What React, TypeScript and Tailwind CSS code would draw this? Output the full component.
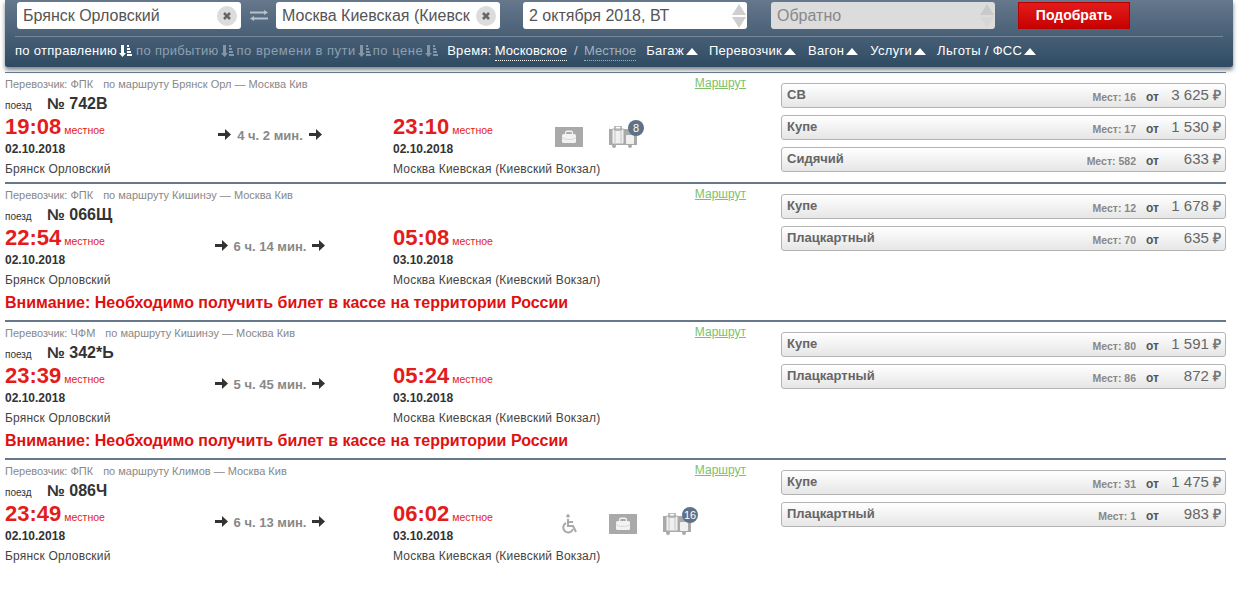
import React from 'react';

const font = "font-['Liberation_Sans',Arial,sans-serif]";

type Seat = { name: string; seats: number; price: string };
type Train = {
  carrier: string;
  route: string;
  num: string;
  dep: string;
  arr: string;
  arrDate: string;
  dur: string;
  warn?: boolean;
  seats: Seat[];
  icons?: 'bag' | 'all';
  bags?: number;
};

const trains: Train[] = [
  { carrier: 'ФПК', route: 'Брянск Орл — Москва Кив', num: '№ 742В', dep: '19:08', arr: '23:10', arrDate: '02.10.2018', dur: '4 ч. 2 мин.', icons: 'bag', bags: 8,
    seats: [{ name: 'СВ', seats: 16, price: '3 625' }, { name: 'Купе', seats: 17, price: '1 530' }, { name: 'Сидячий', seats: 582, price: '633' }] },
  { carrier: 'ФПК', route: 'Кишинэу — Москва Кив', num: '№ 066Щ', dep: '22:54', arr: '05:08', arrDate: '03.10.2018', dur: '6 ч. 14 мин.', warn: true,
    seats: [{ name: 'Купе', seats: 12, price: '1 678' }, { name: 'Плацкартный', seats: 70, price: '635' }] },
  { carrier: 'ЧФМ', route: 'Кишинэу — Москва Кив', num: '№ 342*Ь', dep: '23:39', arr: '05:24', arrDate: '03.10.2018', dur: '5 ч. 45 мин.', warn: true,
    seats: [{ name: 'Купе', seats: 80, price: '1 591' }, { name: 'Плацкартный', seats: 86, price: '872' }] },
  { carrier: 'ФПК', route: 'Климов — Москва Кив', num: '№ 086Ч', dep: '23:49', arr: '06:02', arrDate: '03.10.2018', dur: '6 ч. 13 мин.', icons: 'all', bags: 16,
    seats: [{ name: 'Купе', seats: 31, price: '1 475' }, { name: 'Плацкартный', seats: 1, price: '983' }] },
];

const SortIcon = ({ active }: { active?: boolean }) => (
  <svg width="13" height="12" viewBox="0 0 13 12" className={active ? 'text-white' : 'text-[#8495a5]'} fill="currentColor">
    <path d="M2 0h3v8h2l-3.500 4L0 8h2z" />
    <path d="M8 0h2v2H8zM8 3h3v2H8zM8 6h4v2H8zM8 9h5v2H8z" />
  </svg>
);

const Up = () => <span className="ml-[2px] inline-block w-0 h-0 border-l-[6px] border-r-[6px] border-b-[7px] border-l-transparent border-r-transparent border-b-white" />;

const Clear = () => (
  <span className="w-5 h-5 rounded-full bg-[#dcdcdc] flex items-center justify-center shrink-0">
    <svg width="8" height="8" viewBox="0 0 8 8" stroke="#666" strokeWidth="2.500"><path d="M1 1l6 6M7 1L1 7" /></svg>
  </span>
);

const Spinner = ({ light }: { light?: boolean }) => (
  <div className="flex flex-col gap-[2px]">
    <span className={`w-0 h-0 border-l-[7px] border-r-[7px] border-b-[11px] border-l-transparent border-r-transparent ${light ? 'border-b-[#c9c9c9]' : 'border-b-[#cfcfcf]'}`} />
    <span className={`w-0 h-0 border-l-[7px] border-r-[7px] border-t-[11px] border-l-transparent border-r-transparent ${light ? 'border-t-[#d6d6d6]' : 'border-t-[#cfcfcf]'}`} />
  </div>
);

const Header = () => (
  <div className="mx-[5px] h-[67px] bg-gradient-to-b from-[#66788c] to-[#2e4b63] shadow-[0_3px_4px_rgba(40,50,60,0.6)] rounded-b-[2px] px-[10px] pt-[2px]">
    <div className="flex items-center h-[27px] ml-[2px]">
      <div className="w-[224px] h-[27px] bg-white rounded-[3px] pl-[6px] pr-[4px] flex items-center justify-between text-[16px] text-[#555]">
        <span>Брянск Орловский</span>
        <Clear />
      </div>
      <svg width="18" height="11" viewBox="0 0 18 11" className="ml-[9px] mr-[8px] text-[#b8c2cb]" fill="currentColor">
        <path d="M14 0l4 2.500L14 5V3.500H0v-2h14zM4 6v1.500h14v2H4V11L0 8.500z" />
      </svg>
      <div className="w-[224px] h-[27px] bg-white rounded-[3px] pl-[6px] pr-[4px] flex items-center justify-between text-[16px] text-[#555]">
        <span className="whitespace-nowrap overflow-hidden w-[188px]">Москва Киевская (Киевск</span>
        <Clear />
      </div>
      <div className="ml-[23px] w-[224px] h-[27px] bg-white rounded-[3px] pl-[6px] pr-[1px] flex items-center justify-between text-[16px] text-[#555]">
        <span>2 октября 2018, ВТ</span>
        <Spinner />
      </div>
      <div className="ml-[24px] w-[224px] h-[27px] bg-[#dcdcdc] rounded-[3px] pl-[6px] pr-[1px] flex items-center justify-between text-[16px] text-[#888]">
        <span>Обратно</span>
        <Spinner light />
      </div>
      <button className="ml-[23px] w-[112px] h-[27px] border border-[#b80000] bg-gradient-to-b from-[#e41a1a] to-[#c70000] text-white font-bold text-[14px]">Подобрать</button>
    </div>
    <div className="mt-[7px] mb-[6px] border-t border-[#76889a]" />
    <div className="flex items-center text-[13px] h-[16px] whitespace-nowrap tracking-[0.3px]">
      <span className="text-white">по отправлению</span><span className="ml-[2px]"><SortIcon active /></span>
      <span className="ml-[4px] text-[#8ea0b0]">по прибытию</span><span className="ml-[2px]"><SortIcon /></span>
      <span className="ml-[3px] text-[#8ea0b0] tracking-[0.5px]">по времени в пути</span><span className="ml-[2px]"><SortIcon /></span>
      <span className="ml-[2px] text-[#8ea0b0] tracking-[0.5px]">по цене</span><span className="ml-[2px]"><SortIcon /></span>
      <span className="ml-[9px] text-white">Время:</span>
      <span className="ml-[3px] text-white border-b border-dotted border-white tracking-[0.1px]">Московское</span>
      <span className="ml-[7px] text-[#c5ced6]">/</span>
      <span className="ml-[6px] text-[#9fb0bf] border-b border-dotted border-[#9fb0bf] tracking-normal">Местное</span>
      <span className="ml-[10px] text-white">Багаж</span><Up />
      <span className="ml-[11px] text-white">Перевозчик</span><Up />
      <span className="ml-[12px] text-white">Вагон</span><Up />
      <span className="ml-[12px] text-white">Услуги</span><Up />
      <span className="ml-[11px] text-white">Льготы / ФСС</span><Up />
    </div>
  </div>
);

const Arrow = () => (
  <svg width="13" height="11" viewBox="0 0 13 11" fill="#333"><path d="M0 4h7V0l6 5.500-6 5.500V7H0z" /></svg>
);

const Handbag = () => (
  <span className="w-7 h-5 bg-[#a9a9a9] flex items-center justify-center">
    <svg width="16" height="14" viewBox="0 0 16 14" fill="#f2f2f2">
      <path d="M4 4V2.500C4 1.200 5 .5 6 .5h4c1 0 2 .7 2 2V4h-1.200V2.800c0-.5-.3-.9-.9-.9H6.100c-.6 0-.9.4-.9.9V4z" />
      <rect x="1" y="4" width="14" height="9" rx="1.500" />
      <path d="M1 7.500c2 1.500 4 2 7 2s5-.5 7-2" fill="none" stroke="#d0d0d0" strokeWidth="0.800" />
    </svg>
  </span>
);

const Luggage = ({ count }: { count: number }) => (
  <span className="relative w-7 h-[23px] block">
    <svg width="28" height="23" viewBox="0 0 28 23" className="absolute left-0 top-0">
      <rect x="0" y="3" width="28" height="16" fill="#a9a9a9" />
      <rect x="3" y="3" width="12" height="15" rx="1" fill="#f0f0f0" stroke="#a9a9a9" />
      <rect x="6" y="0" width="6" height="4" fill="none" stroke="#a9a9a9" strokeWidth="1.500" />
      <path d="M6 4v13M12 4v13" stroke="#c4c4c4" strokeWidth="1" />
      <rect x="17" y="9" width="8" height="9" rx="1" fill="#f0f0f0" />
      <circle cx="5" cy="20" r="2" fill="#a9a9a9" />
      <circle cx="21" cy="20" r="2" fill="#a9a9a9" />
    </svg>
    <span className="absolute left-[19px] top-[-6px] w-4 h-4 rounded-full bg-[#5f7186] text-white text-[11px] leading-4 text-center">{count}</span>
  </span>
);

const Wheelchair = () => (
  <svg width="18" height="20" viewBox="0 0 18 20" fill="none" stroke="#a9a9a9" strokeWidth="2">
    <circle cx="7" cy="2" r="1.800" fill="#a9a9a9" stroke="none" />
    <path d="M7 5v7h5l3 6" />
    <path d="M7 8h5" />
    <path d="M5 9a5 5 0 1 0 7 6" />
  </svg>
);

const SeatRow = ({ s }: { s: Seat }) => (
  <div className="h-[25px] rounded-[3px] border border-[#b4b4b4] bg-gradient-to-b from-white to-[#e6e6e6] pl-[5px] pr-[4px] flex items-start text-[#666]">
    <span className="text-[13px] font-bold leading-[21px]">{s.name}</span>
    <span className="ml-auto text-[10.500px] font-bold text-[#888] leading-[26px]">Мест: {s.seats}</span>
    <span className="ml-[10px] w-[19px] text-[12px] font-bold text-[#555] leading-[26px]">от</span>
    <span className="w-[56px] text-right text-[15px] leading-[22px] whitespace-nowrap">{s.price} <span className="font-bold text-[14px] text-[#777]">₽</span></span>
  </div>
);

const Row = ({ t, last }: { t: Train; last: boolean }) => (
  <div className={`mx-[5px] w-[1221px] flex ${last ? '' : 'border-b-2 border-[#66788a]'}`}>
    <div className="w-[741px] pt-[3px]">
      <div className="flex justify-between h-[16px] text-[11px] leading-[16px] text-[#888]">
        <div>
          <span>Перевозчик: {t.carrier}</span>
          <span className="ml-[10px]">по маршруту {t.route}</span>
        </div>
        <span className="text-[12px] leading-[14px] text-[#7cc16a] underline">Маршрут</span>
      </div>
      <div className="flex items-baseline h-[22px]">
        <span className="w-[42px] text-[10px] text-[#333]">поезд</span>
        <span className="text-[16px] font-bold text-[#333]">{t.num}</span>
      </div>
      <div className="flex mt-[1px]">
        <div className="w-[200px]">
          <div className="h-[24px] text-[#e31c1c] leading-[24px] whitespace-nowrap">
            <span className="text-[22px] font-bold">{t.dep}</span>
            <span className="ml-[3px] text-[10.500px]">местное</span>
          </div>
          <div className="text-[12px] font-bold text-[#333] mt-[2px] leading-[16px]">02.10.2018</div>
          <div className="text-[12px] text-[#444] mt-[4px] leading-[16px] tracking-[0.2px]">Брянск Орловский</div>
        </div>
        <div className="w-[130px] mr-[58px] flex justify-center items-start pt-[14px] text-[13px] font-bold text-[#888] leading-[14px] whitespace-nowrap">
          <Arrow /><span className="mx-[6px]">{t.dur}</span><Arrow />
        </div>
        <div className="w-[162px]">
          <div className="h-[24px] text-[#e31c1c] leading-[24px] whitespace-nowrap">
            <span className="text-[22px] font-bold">{t.arr}</span>
            <span className="ml-[3px] text-[10.500px]">местное</span>
          </div>
          <div className="text-[12px] font-bold text-[#333] mt-[2px] leading-[16px]">{t.arrDate}</div>
          <div className="text-[12px] text-[#444] mt-[4px] leading-[16px] tracking-[0.2px] whitespace-nowrap">Москва Киевская (Киевский Вокзал)</div>
        </div>
        {t.icons && (
          <div className="flex items-center gap-[26px] h-[20px] mt-[12px]">
            {t.icons === 'all' && <span className="ml-[6px] mr-[4px]"><Wheelchair /></span>}
            <Handbag />
            <Luggage count={t.bags ?? 0} />
          </div>
        )}
      </div>
      {t.warn && <div className="mt-[5px] h-[22px] text-[16px] font-bold text-[#e01010] leading-[20px]">Внимание: Необходимо получить билет в кассе на территории России</div>}
      <div className="h-[5px]" />
    </div>
    <div className="ml-[35px] w-[445px] pt-[10px] flex flex-col gap-[7px]">
      {t.seats.map(s => <SeatRow key={s.name} s={s} />)}
    </div>
  </div>
);

export default function App() {
  return (
    <div className={`${font} w-[1238px] h-[604px] bg-white overflow-hidden`}>
      <Header />
      <div className="mt-[5px] mx-[5px] w-[1221px] h-[1px] bg-[#66788a]" />
      {trains.map((t, i) => <Row key={t.num} t={t} last={i === trains.length - 1} />)}
    </div>
  );
}
